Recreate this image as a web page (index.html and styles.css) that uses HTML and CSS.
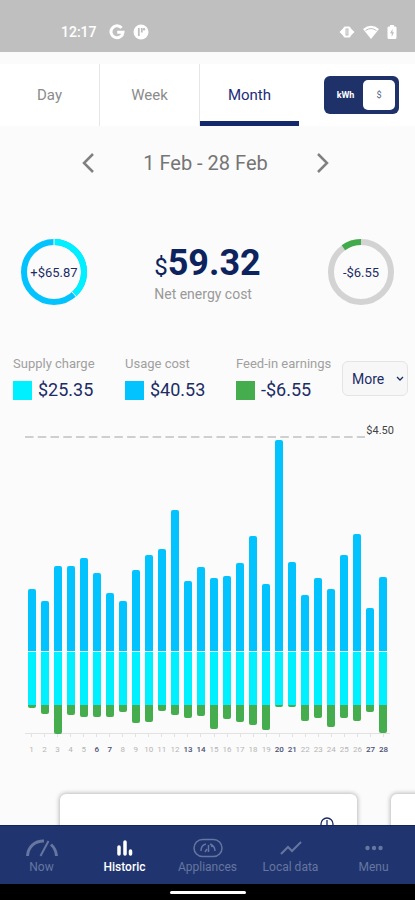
FILE: index.html
```html
<!DOCTYPE html>
<html lang="en">
<head>
<meta charset="utf-8">
<meta name="viewport" content="width=device-width, initial-scale=1">
<title>Energy history</title>
<link rel="stylesheet" href="styles.css">
</head>
<body>
<div class="status">
  <span class="status-time">12:17</span>
  <svg width="16" height="16" viewBox="0 0 16 16" fill="none" stroke="#fff" stroke-width="3"><path d="M12.6 3.9A6 6 0 1 0 14 8.3H8.2"/></svg>
  <svg width="16" height="16" viewBox="0 0 16 16"><circle cx="8" cy="8" r="7.5" fill="#fff"/><path d="M5.800 4v8M8.800 4v4.500" stroke="#bfbfbf" stroke-width="1.800" fill="none"/><circle cx="11" cy="5.200" r="1.200" fill="#bfbfbf"/></svg>
  <span class="status-space"></span>
  <svg width="16" height="14" viewBox="0 0 16 14"><path d="M5 2.500L.5 7 5 11.500zM11 2.500L15.500 7 11 11.500z" fill="#fff"/><rect x="4.500" y="1.500" width="7" height="11" rx="1.500" fill="#fff"/><rect x="6.500" y="3.500" width="3" height="7" fill="#bfbfbf"/><path d="M8 4.500v5" stroke="#e6e6e6"/></svg>
  <svg width="16" height="14" viewBox="0 0 16 14"><path d="M0 4Q8-2.500 16 4L8 14z" fill="#fff"/><path d="M2.500 5.600Q8 1.500 13.500 5.600" stroke="#bfbfbf" fill="none"/></svg>
  <svg width="10" height="14" viewBox="0 0 10 14"><path d="M3 0h4v1.500h1.500Q9.500 1.500 9.500 3v9.500Q9.500 14 8 14H2Q.5 14 .5 12.500V3Q.5 1.500 1.500 1.500H3z" fill="#fff"/><path d="M5.500 4L3 8.300h1.700V12L7 7.300H5.500z" fill="#bfbfbf"/></svg>
</div>
<header class="tabs">
  <button class="tab">Day</button>
  <button class="tab">Week</button>
  <button class="tab active" aria-current="true">Month</button>
  <div class="units">
    <div class="toggle">
      <button class="unit" aria-pressed="false">kWh</button>
      <button class="unit chosen" aria-pressed="true">$</button>
    </div>
  </div>
</header>
<main>
  <div class="period">
    <button class="arrow" aria-label="Previous month"><svg width="12" height="20" viewBox="0 0 12 20"><path d="M11 1L2 10l9 9"/></svg></button>
    <h1>1 Feb - 28 Feb</h1>
    <button class="arrow" aria-label="Next month"><svg width="12" height="20" viewBox="0 0 12 20"><path d="M1 1l9 9-9 9"/></svg></button>
  </div>
  <section class="summary">
    <div class="donut">
      <svg viewBox="0 0 68 68" fill="none" stroke-width="6">
        <circle cx="34" cy="34" r="30" stroke="#02c3fd"/>
        <path d="M34 4A30 30 0 0 1 54.100 56.300" stroke="#00f0ff"/>
        <path d="M34 0v8M51.500 53.400L56.800 59.300" stroke="#fbfbfb" stroke-width="1"/>
      </svg>
      <span>+$65.87</span>
    </div>
    <div class="net">
      <p class="net-value"><small>$</small>59.32</p>
      <p class="net-label">Net energy cost</p>
    </div>
    <div class="donut">
      <svg viewBox="0 0 68 68" fill="none" stroke-width="6">
        <circle cx="34" cy="34" r="30" stroke="#d3d3d3"/>
        <path d="M16.400 9.700A30 30 0 0 1 34 4" stroke="#41ab4b"/>
      </svg>
      <span>-$6.55</span>
    </div>
  </section>
  <section class="legend">
    <div><p class="legend-name">Supply charge</p><p class="legend-value"><i class="swatch supply"></i>$25.35</p></div>
    <div><p class="legend-name">Usage cost</p><p class="legend-value"><i class="swatch usage"></i>$40.53</p></div>
    <div><p class="legend-name">Feed-in earnings</p><p class="legend-value"><i class="swatch feed"></i>-$6.55</p></div>
    <div class="more">
      <select aria-label="More details"><option>More</option></select>
      <svg width="8" height="6" viewBox="0 0 8 6"><path d="M1 1l3 3 3-3" fill="none" stroke="#1c2c66" stroke-width="1.300"/></svg>
    </div>
  </section>
  <section class="chart">
    <div class="limit">
      <svg height="2" width="100%"><line x1="0" y1="1" x2="100%" y2="1" pathLength="400" stroke-dasharray="10 5" stroke="#cfcfcf" stroke-width="2"/></svg>
      <span>$4.50</span>
    </div>
    <div class="plot" id="plot"></div>
    <div class="days" id="days"></div>
  </section>
  <section class="cards">
    <article class="card"><svg width="14" height="14" viewBox="0 0 14 14" fill="none" stroke="#1c2c66"><circle cx="7" cy="7" r="6" stroke-width="1.300"/><path d="M7 3v6" stroke-width="1.300"/></svg></article>
    <article class="card"></article>
  </section>
</main>
<nav class="bottom">
  <a href="#now"><svg width="34" height="20" viewBox="0 0 34 20" fill="none" stroke="currentColor"><path d="M2.500 18C3 9 9.500 3 19 3.100M26 6.500Q31 11 31.500 18" stroke-width="3"/><path d="M15.500 18l8-15" stroke-width="2"/></svg>Now</a>
  <a href="#historic" class="here"><svg width="34" height="20" viewBox="0 0 34 20" stroke="currentColor" stroke-width="3.500" stroke-linecap="round"><path d="M11 9v7M17 4v12M22.500 13v3"/></svg>Historic</a>
  <a href="#appliances"><svg width="34" height="20" viewBox="0 0 34 20" fill="none" stroke="currentColor" stroke-width="1.500"><rect x="3" y="1.500" width="28" height="17" rx="8.500"/><path d="M10 13q0-6 5-7M14 14l2-3M17.500 14V7M19 6q5 2 5 7M21 9l-1-3"/></svg>Appliances</a>
  <a href="#local"><svg width="34" height="20" viewBox="0 0 34 20" fill="none" stroke="currentColor" stroke-width="2"><path d="M7 16l7-7 4 4 9-9"/></svg>Local data</a>
  <a href="#menu"><svg width="34" height="20" viewBox="0 0 34 20" fill="currentColor"><circle cx="10.500" cy="10" r="2.200"/><circle cx="17" cy="10" r="2.200"/><circle cx="23.500" cy="10" r="2.200"/></svg>Menu</a>
</nav>
<div class="home"><i></i></div>
<script src="chart.js"></script>
</body>
</html>
```
FILE: styles.css
```css
* { box-sizing: border-box; }
body {
  margin: 0;
  height: 100vh;
  display: flex;
  flex-direction: column;
  overflow: hidden;
  background: #fbfbfb;
  font-family: Roboto, sans-serif;
  color: #1c2c66;
}
p, h1 { margin: 0; }
svg { display: block; }
button {
  border: 0;
  padding: 0;
  background: none;
  font: inherit;
  color: inherit;
}
.status {
  display: flex;
  align-items: center;
  gap: 8px;
  padding: 12px 18px 0 61px;
  height: 52px;
  flex: none;
  background: #bfbfbf;
  color: #fff;
}
.status-time { font: 500 14px/16px Roboto, sans-serif; }
.status-space { flex: 1; }
.tabs {
  flex: none;
  display: grid;
  grid-template-columns: 20fr 20fr 20fr 23fr;
  margin-top: 12px;
  height: 62px;
  background: #fff;
}
.tab {
  border-right: 1px solid #e6e6e6;
  color: #8b8b8b;
  font-size: 15px;
}
.tab.active {
  border-right-color: transparent;
  color: #1c2c78;
  box-shadow: inset 0 -5px #14296c;
}
.units {
  display: flex;
  align-items: center;
  justify-content: flex-end;
  padding-right: 16px;
}
.toggle {
  display: flex;
  width: 75px;
  height: 38px;
  padding: 4px;
  border-radius: 6px;
  background: #1e3269;
}
.unit { flex: 1; font-size: 9px; font-weight: 700; color: #fff; }
.unit.chosen { flex: none; width: 32px; background: #fff; color: #54608c; border-radius: 5px; font-weight: 400; }
main { flex: 1; min-height: 0; overflow: hidden; }
.period {
  display: flex;
  align-items: center;
  justify-content: center;
  gap: 49px;
  padding-top: 25px;
  padding-right: 4px;
}
.period h1 { font: 400 20px/24px Roboto, sans-serif; color: #757575; }
.arrow path { fill: none; stroke: #808080; stroke-width: 2.5; }
.summary {
  display: flex;
  align-items: center;
  justify-content: space-between;
  padding: 0 20px;
  margin-top: 63px;
}
.donut { display: grid; place-items: center; width: 68px; }
.donut > * { grid-area: 1 / 1; }
.donut svg { width: 100%; }
.donut span { font-size: 13px; }
.net { padding-top: 2px; }
.net-value { font-size: 36px; line-height: 38px; font-weight: 700; color: #0d235e; }
.net-value small { font-size: 24px; font-weight: 400; }
.net-label { font-size: 14px; line-height: 16px; color: #999; }
.legend {
  display: grid;
  grid-template-columns: 112fr 111fr 106fr 66px;
  align-items: start;
  padding: 0 7px 0 13px;
  margin-top: 48px;
}
.legend-name { font-size: 13px; line-height: 20px; color: #a0a0a0; white-space: nowrap; }
.legend-value { display: flex; align-items: center; gap: 6px; margin-top: 5px; font-size: 18px; line-height: 22px; }
.swatch { width: 19px; height: 19px; }
.supply { background: #00f0ff; }
.usage { background: #02c3fd; }
.feed { background: #46ad4f; }
.more { display: grid; align-items: center; margin-top: 7px; }
.more > * { grid-area: 1 / 1; }
.more svg { justify-self: end; margin-right: 4px; pointer-events: none; }
.more select {
  appearance: none;
  width: 100%;
  height: 35px;
  padding: 0 0 0 9px;
  border: 1px solid #e4e4e6;
  border-radius: 6px;
  background: #f7f7f8;
  color: inherit;
  font: 14px Roboto, sans-serif;
}
.chart { padding: 0 25px; margin-top: 23px; }
.limit { display: flex; align-items: flex-end; margin-right: -4px; height: 14px; }
.limit svg { flex: 1; min-width: 0; }
.limit span { margin-left: 1px; font-size: 11px; line-height: 14px; color: #444; }
.plot {
  display: grid;
  grid-template-columns: repeat(28, 1fr);
  justify-items: center;
  margin-top: 2px;
  background: linear-gradient(#e2e2e2, #e2e2e2) 0 100% / 100% 1px no-repeat;
}
.day { display: grid; grid-template-rows: 211px 54px 29px; width: 8px; }
.day .usage { align-self: end; border-radius: 2px 2px 0 0; }
.day .supply { border-top: 1px solid #e2fbff; }
.day .feed { border-radius: 0 0 2px 2px; }
.days {
  display: grid;
  grid-template-columns: repeat(28, 1fr);
  font-size: 8px;
  line-height: 12px;
  text-align: center;
  color: #b5b5b5;
}
.days > *::before {
  content: "";
  display: block;
  width: 1px;
  height: 3px;
  margin: 0 auto 7px;
  background: #e2e2e2;
}
.days b { font-weight: 500; color: #4a4f72; }
.cards { display: flex; gap: 34px; padding-left: 60px; margin-top: 38px; }
.card {
  flex: none;
  display: flex;
  justify-content: flex-end;
  width: calc(100vw - 118px);
  height: 120px;
  padding: 23px;
  border-radius: 6px;
  background: #fff;
  box-shadow: 0 0 4px 1px #bbb;
}
.status-time { margin-right: 4px; }
.bottom {
  flex: none;
  display: grid;
  grid-template-columns: repeat(5, 1fr);
  height: 59px;
  padding-top: 12px;
  border-top: 1px solid #14245a;
  background: #20356f;
}
.bottom a {
  display: flex;
  flex-direction: column;
  align-items: center;
  gap: 1px;
  color: #66769f;
  font-size: 12px;
  line-height: 16px;
  text-decoration: none;
}
.bottom a.here { color: #fff; font-weight: 500; }
.home { flex: none; display: flex; align-items: center; justify-content: center; height: 16px; background: #000; }
.home i { width: 76px; height: 3px; border-radius: 2px; background: #fff; }
```
FILE: chart.js
```js
// [usage height, feed-in height] in pixels for each day of the month
const days = [
  [62, 3], [50, 9], [85, 29], [85, 10], [93, 12], [78, 12], [58, 12],
  [50, 7], [81, 18], [96, 17], [102, 6], [141, 10], [70, 13], [84, 11],
  [73, 24], [75, 14], [88, 17], [115, 20], [67, 25], [211, 2], [89, 2],
  [56, 16], [73, 13], [62, 22], [96, 13], [117, 16], [43, 7], [74, 28]
];
const plot = document.getElementById('plot');
const labels = document.getElementById('days');
days.forEach(([usage, feed], i) => {
  const day = document.createElement('div');
  day.className = 'day';
  day.innerHTML = `<div class="usage" style="height:${usage}px"></div><div class="supply"></div><div class="feed" style="height:${feed}px"></div>`;
  plot.append(day);
  const weekend = i % 7 === 5 || i % 7 === 6;
  const label = document.createElement(weekend ? 'b' : 'span');
  label.textContent = i + 1;
  labels.append(label);
});
```
